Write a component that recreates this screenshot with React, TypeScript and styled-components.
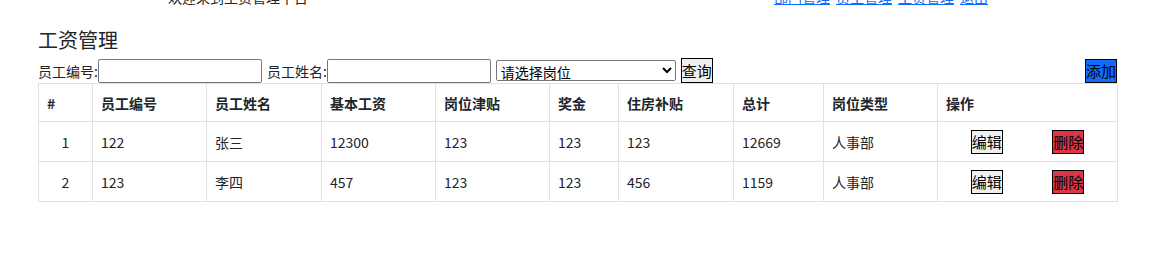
import React from "react";
import styled, { createGlobalStyle } from "styled-components";

const GlobalStyle = createGlobalStyle`
  body {
    margin: 0;
    background: #fff;
    color: #212529;
    font-family: "Noto Sans CJK SC", "Liberation Sans", sans-serif;
    overflow: hidden;
  }
`;

const Page = styled.div`
  padding: 0 47px 0 38px;
`;

const TopBar = styled.div`
  display: flex;
  justify-content: space-between;
  align-items: center;
  height: 20px;
  margin-top: -13px;
  padding: 0 129px 0 130px;
  font-size: 14px;
`;

const Links = styled.div`
  display: flex;
  gap: 6px;
`;

const NavLink = styled.a`
  color: #0d6efd;
  text-decoration: underline;
  cursor: pointer;
`;

const Title = styled.h3`
  margin: 19px 0 0;
  font-size: 20px;
  font-weight: 400;
  line-height: 28px;
`;

const FilterRow = styled.div`
  display: flex;
  align-items: center;
  height: 25px;
  margin-top: 4px;
  font-size: 14px;
`;

const Label = styled.span<{ $gap?: number }>`
  margin-left: ${(p) => p.$gap ?? 0}px;
`;

const TextInput = styled.input`
  box-sizing: border-box;
  width: 164px;
  height: 24px;
  border: 1px solid #767676;
  border-radius: 2px;
  padding: 1px 2px;
`;

const Select = styled.select`
  box-sizing: border-box;
  width: 180px;
  height: 21px;
  margin-left: 5px;
  border: 1px solid #767676;
  border-radius: 2px;
  font-family: inherit;
  font-size: 14px;
  padding: 0;
  background: #fff;
  color: #000;
`;

const Btn = styled.button<{ $tone?: "plain" | "primary" | "danger" }>`
  box-sizing: border-box;
  height: 24px;
  padding: 0;
  border: 1px solid #000;
  border-radius: 0;
  font-family: inherit;
  font-size: 15px;
  line-height: 20px;
  color: #000;
  cursor: pointer;
  background: ${(p) =>
    p.$tone === "primary" ? "#0d6efd" : p.$tone === "danger" ? "#dc3545" : "#efefef"};
`;

const QueryBtn = styled(Btn)`
  margin-left: 5px;
  height: 25px;
`;

const AddBtn = styled(Btn)`
  margin-left: auto;
`;

const Table = styled.table`
  width: 1079px;
  border-collapse: collapse;
  table-layout: fixed;
  font-size: 14px;
  color: #212529;
`;

const Th = styled.th`
  height: 37px;
  padding: 0 8px;
  border: 1px solid #dee2e6;
  text-align: left;
  font-weight: 700;
`;

const Td = styled.td<{ $center?: boolean }>`
  height: 39px;
  padding: 0 8px;
  border: 1px solid #dee2e6;
  text-align: ${(p) => (p.$center ? "center" : "left")};
`;

const Actions = styled.div`
  display: flex;
  justify-content: space-around;
  align-items: center;
`;

const widths = [54, 114, 115, 114, 114, 69, 115, 90, 114, 180];
const heads = ["#", "员工编号", "员工姓名", "基本工资", "岗位津贴", "奖金", "住房补贴", "总计", "岗位类型", "操作"];

const rows = [
  { no: "122", name: "张三", base: 12300, post: 123, bonus: 123, house: 123, total: 12669, type: "人事部" },
  { no: "123", name: "李四", base: 457, post: 123, bonus: 123, house: 456, total: 1159, type: "人事部" },
];

export default function App() {
  return (
    <>
      <GlobalStyle />
      <Page>
        <TopBar>
          <span>欢迎来到工资管理平台</span>
          <Links>
            <NavLink>部门管理</NavLink>
            <NavLink>员工管理</NavLink>
            <NavLink>工资管理</NavLink>
            <NavLink>退出</NavLink>
          </Links>
        </TopBar>
        <Title>工资管理</Title>
        <FilterRow>
          <Label>员工编号:</Label>
          <TextInput />
          <Label $gap={5}>员工姓名:</Label>
          <TextInput />
          <Select defaultValue="">
            <option value="">请选择岗位</option>
            <option value="hr">人事部</option>
          </Select>
          <QueryBtn>查询</QueryBtn>
          <AddBtn $tone="primary">添加</AddBtn>
        </FilterRow>
        <Table>
          <colgroup>
            {widths.map((w, i) => (
              <col key={i} style={{ width: w }} />
            ))}
          </colgroup>
          <thead>
            <tr>
              {heads.map((h) => (
                <Th key={h}>{h}</Th>
              ))}
            </tr>
          </thead>
          <tbody>
            {rows.map((r, i) => (
              <tr key={r.no}>
                <Td $center>{i + 1}</Td>
                <Td>{r.no}</Td>
                <Td>{r.name}</Td>
                <Td>{r.base}</Td>
                <Td>{r.post}</Td>
                <Td>{r.bonus}</Td>
                <Td>{r.house}</Td>
                <Td>{r.total}</Td>
                <Td>{r.type}</Td>
                <Td>
                  <Actions>
                    <Btn>编辑</Btn>
                    <Btn $tone="danger">删除</Btn>
                  </Actions>
                </Td>
              </tr>
            ))}
          </tbody>
        </Table>
      </Page>
    </>
  );
}
